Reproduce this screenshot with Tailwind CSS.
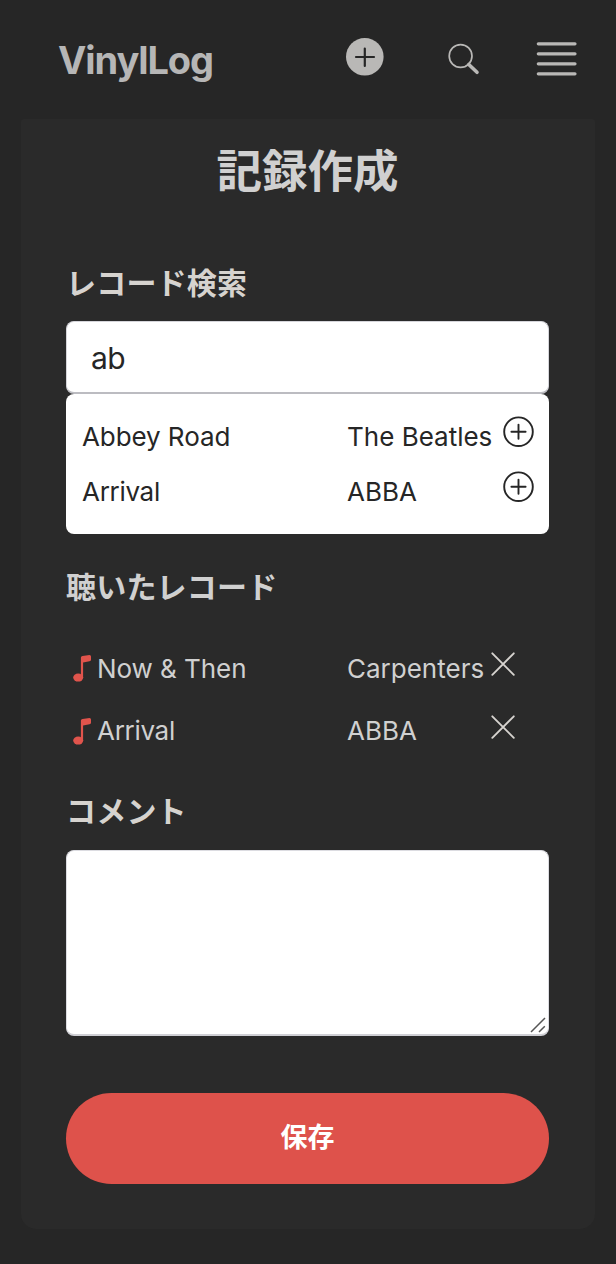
<!DOCTYPE html>
<html lang="ja">
<head>
<meta charset="utf-8">
<title>VinylLog</title>
<script src="https://cdn.jsdelivr.net/npm/@tailwindcss/browser@4"></script>
</head>
<body class="bg-[#262626] font-['Inter','Noto_Sans_CJK_JP',sans-serif] text-[#d0d0d0]">
<div class="flex h-[1264px] w-[616px] flex-col overflow-hidden">
  <header class="flex h-[119px] shrink-0 items-start pl-[58px]">
    <div class="mt-[36px] w-[288px] text-[38px] leading-[48px] font-bold tracking-[-1.1px] text-[#b6b6b6]">VinylLog</div>
    <svg class="mt-[38px] size-[38px] shrink-0" viewBox="0 0 38 38"><circle cx="18.8" cy="18.8" r="18.8" fill="#b9b8b6"/><path d="M18.8 10.500v17.500M10 19h18" stroke="#262626" stroke-width="2.2" stroke-linecap="round"/></svg>
    <svg class="mt-[43px] ml-[64px] size-[32px] shrink-0" viewBox="0 0 32 32" fill="none" stroke="#b9b8b6"><circle cx="12.6" cy="13" r="11.4" stroke-width="1.7"/><path d="M20.8 21.5l8.2 7.8" stroke-width="3.6" stroke-linecap="round"/></svg>
    <svg class="mt-[42px] ml-[56px] h-[34px] w-[42px] shrink-0" viewBox="0 0 42 34" stroke="#b9b8b6" stroke-width="3.2" stroke-linecap="round"><path d="M2.3 1.8h36.700M2.3 11.8h36.700M2.3 21.8h36.700M2.3 31.8h36.700"/></svg>
  </header>
  <main class="mx-[21px] flex h-[1110px] w-[573.5px] flex-col rounded-t-[3px] rounded-b-[15px] bg-[#2a2a2a] pr-[45.5px] pl-[45px]">
    <h1 class="mt-[23px] h-[60px] text-center text-[45.5px] leading-[60px] font-bold">記録作成</h1>
    <h2 class="mt-[59px] h-[44px] text-[30px] leading-[44px] font-bold tracking-[0.2px] text-[#d6d3cf]">レコード検索</h2>
    <div class="mt-[16px] flex h-[73px] items-center rounded-[8px] border border-[#d5d5da] border-b-2 border-b-[#bcbcc1] bg-white pt-[2px] pl-[24px] text-[30px] text-[#262626]"><span class="tracking-[-0.5px]">ab</span></div>
    <div class="h-[140px] rounded-[8px] bg-white pt-[15px] pl-[16px] text-[26px] leading-[55px] text-[#262626]">
      <div class="flex h-[55px]">
        <span class="w-[265px] tracking-[-0.08px]">Abbey Road</span><span class="w-[156px] whitespace-nowrap">The Beatles</span>
        <svg class="mt-[6px] size-[32px] shrink-0" viewBox="0 0 32 32" fill="none" stroke="#262626" stroke-width="1.9" stroke-linecap="round"><circle cx="15.5" cy="16.7" r="14.3"/><path d="M15.5 9.600v14.200M8.400 16.700h14.200"/></svg>
      </div>
      <div class="flex h-[55px]">
        <span class="w-[265px] tracking-[-0.3px]">Arrival</span><span class="w-[156px] whitespace-nowrap">ABBA</span>
        <svg class="mt-[6px] size-[32px] shrink-0" viewBox="0 0 32 32" fill="none" stroke="#262626" stroke-width="1.9" stroke-linecap="round"><circle cx="15.5" cy="16.7" r="14.3"/><path d="M15.5 9.600v14.200M8.400 16.700h14.200"/></svg>
      </div>
    </div>
    <h2 class="mt-[31px] h-[44px] text-[30px] leading-[44px] font-bold tracking-[0.2px]">聴いたレコード</h2>
    <div class="mt-[29px] text-[26px] leading-[62px]">
      <div class="flex h-[62px]">
        <svg class="mt-[17px] ml-[7px] h-[28px] w-[19px] shrink-0" viewBox="0 0 19 28" fill="#e0544c"><ellipse cx="5.2" cy="22.6" rx="5" ry="4"/><path d="M7.9 2.6Q8 1.3 9.5 1L16.500 0Q18 0 18 1.500V4.800Q18 6 16.500 6.300L10.100 7.500V23H7.900Z"/></svg>
        <span class="ml-[5px] w-[250px] tracking-[-0.05px]">Now &amp; Then</span><span class="w-[144px] whitespace-nowrap">Carpenters</span>
        <svg class="mt-[13.5px] size-[24px] shrink-0" viewBox="0 0 24 24" stroke="#d6d3cf" stroke-width="1.900" stroke-linecap="round"><path d="M1.300 1.300l21.500 21.500M22.800 1.300l-21.500 21.500"/></svg>
      </div>
      <div class="flex h-[62px]">
        <svg class="mt-[18px] ml-[7px] h-[28px] w-[19px] shrink-0" viewBox="0 0 19 28" fill="#e0544c"><ellipse cx="5.2" cy="22.6" rx="5" ry="4"/><path d="M7.9 2.6Q8 1.3 9.5 1L16.500 0Q18 0 18 1.500V4.800Q18 6 16.500 6.300L10.100 7.500V23H7.900Z"/></svg>
        <span class="ml-[5px] w-[250px] tracking-[-0.3px]">Arrival</span><span class="w-[144px] whitespace-nowrap">ABBA</span>
        <svg class="mt-[14.5px] size-[24px] shrink-0" viewBox="0 0 24 24" stroke="#d6d3cf" stroke-width="1.900" stroke-linecap="round"><path d="M1.300 1.300l21.500 21.500M22.800 1.300l-21.500 21.500"/></svg>
      </div>
    </div>
    <h2 class="mt-[27px] h-[44px] text-[30px] leading-[44px] font-bold tracking-[0.2px] text-[#d6d3cf]">コメント</h2>
    <div class="mt-[17px] flex h-[186px] shrink-0 items-end justify-end rounded-[8px] border border-[#dcdce1] border-b-2 border-b-[#cfcfd4] bg-white">
      <svg class="size-[18px]" viewBox="0 0 18 18" stroke="#555" stroke-width="1.500"><path d="M1 16L15 2M9 16L14.800 10.200"/></svg>
    </div>
    <button class="mt-[57px] h-[91px] shrink-0 rounded-full bg-[#de524b] text-[27px] font-bold text-white">保存</button>
  </main>
</div>
</body>
</html>
